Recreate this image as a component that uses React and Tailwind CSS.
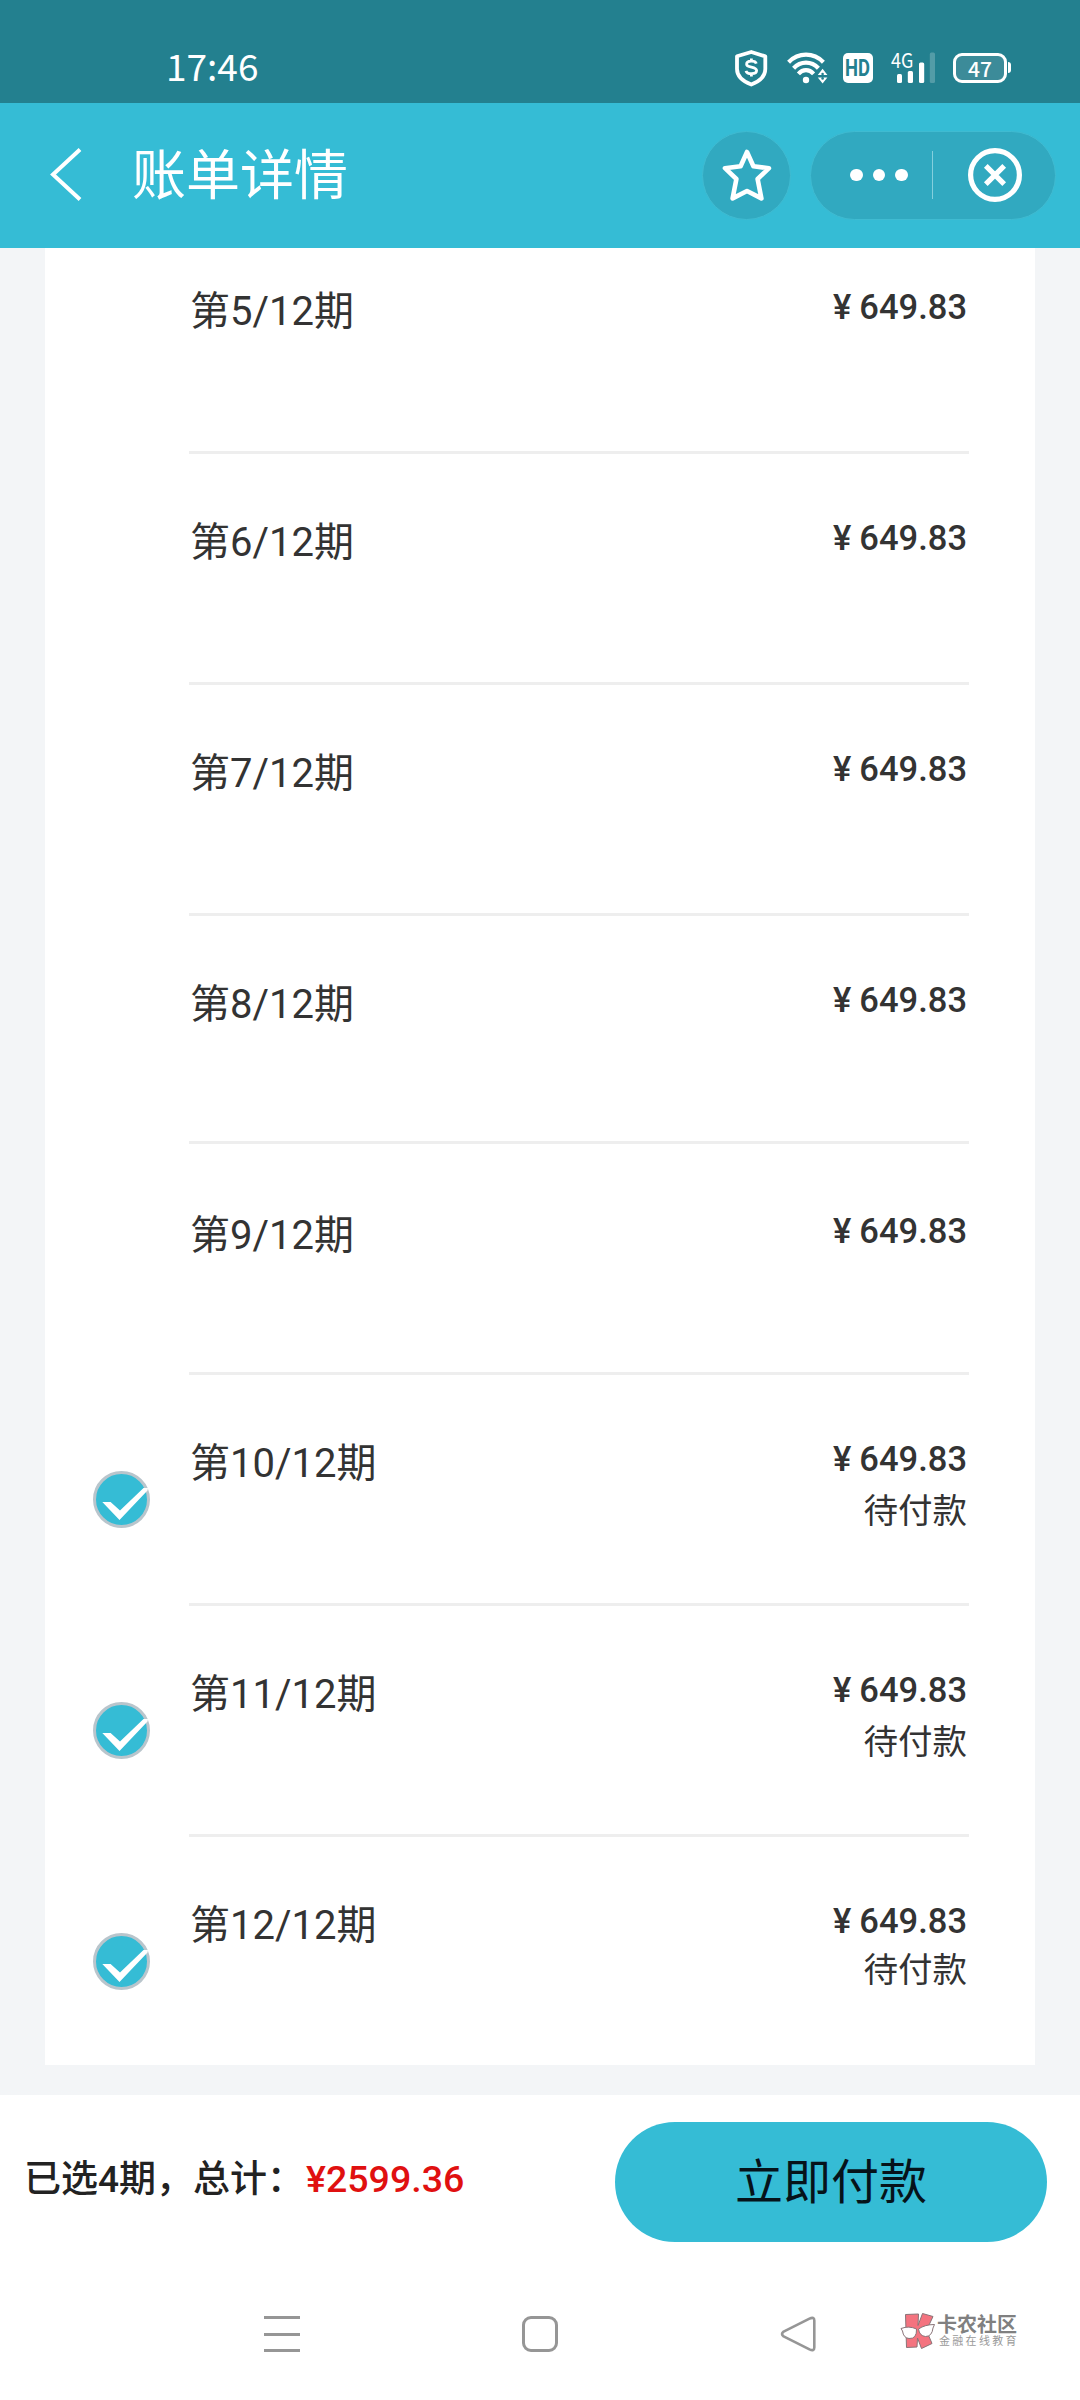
import React, { useState } from 'react';
import clsx from 'clsx';

// className holds the small per-row differences in height and padding
const initialPeriods = [
  { no: 5, amount: '649.83', className: 'h-[206px] pt-[37px]' },
  { no: 6, amount: '649.83', className: 'h-[231px] pt-[62px]' },
  { no: 7, amount: '649.83', className: 'h-[231px] pt-[62px]' },
  { no: 8, amount: '649.83', className: 'h-[228px] pt-[62px]' },
  { no: 9, amount: '649.83', className: 'h-[231px] pt-[65px]' },
  { no: 10, amount: '649.83', status: '待付款', checked: true, className: 'h-[231px] pt-[62px]', statusClass: 'mt-[11px]' },
  { no: 11, amount: '649.83', status: '待付款', checked: true, className: 'h-[231px] pt-[62px]', statusClass: 'mt-[11px]' },
  { no: 12, amount: '649.83', status: '待付款', checked: true, className: 'h-[228px] pt-[62px]', statusClass: 'mt-[8px]' },
];

const StatusBar = () => (
  <div className="flex h-[103px] items-start bg-[#23808f] text-white">
    <span className="ml-[166px] mt-[40px] w-[569px] font-['Noto_Sans_CJK_SC',sans-serif] text-[37px] leading-[50px]">
      17:46
    </span>
    <svg className="mt-[49px] h-[38px] w-[33px]" viewBox="0 0 33 38" fill="none" stroke="currentColor">
      <path d="M16.3 3 L30.3 7.3 V20 C30.3 28 24.5 32.4 16.3 35.6 C8 32.4 2 28 2 20 V7.3 Z" strokeWidth="3.8" strokeLinejoin="round" />
      <path d="M21.3 14.6 C20.3 11.2 11.6 11.2 11.6 15.2 C11.6 19.2 21.6 17.2 21.6 21.6 C21.6 25.8 12 25.6 11 21.8 M16.4 9.6 V12.6 M16.4 24.4 V27.4" strokeWidth="2.8" />
    </svg>
    <svg className="ml-[19px] mt-[51px] h-[34px] w-[42px]" viewBox="0 0 42 34" fill="none" stroke="currentColor" strokeWidth="4.2">
      <path d="M1.6 11.2 C11.5 1.2 26.5 1.2 36.4 11.2" />
      <path d="M6.6 17.2 C13.6 9.8 24.4 9.8 31.4 17.2" />
      <path d="M11.4 22.8 C15.8 18 22.2 18 26.6 22.8" />
      <circle cx="19" cy="29" r="3.2" fill="currentColor" stroke="none" />
      <path d="M30.8 24 L35.6 17.8 L40.4 24 M30.8 26.4 L35.6 32.6 L40.4 26.4" fill="currentColor" stroke="none" />
      <circle cx="35.6" cy="23" r="1.3" fill="#23808f" stroke="none" />
      <circle cx="35.6" cy="27.4" r="1.3" fill="#23808f" stroke="none" />
    </svg>
    <div className="ml-[14px] mt-[53px] flex h-[30px] w-[30px] items-center justify-center rounded-[5px] bg-white">
      <span className="scale-x-80 font-['Roboto',sans-serif] text-[23px] font-bold leading-none text-[#23808f]">HD</span>
    </div>
    <div className="relative ml-[24px] mt-[52px] h-[31px] w-[39px]">
      <span className="absolute -left-[6px] -top-[1px] origin-left scale-x-90 font-['Noto_Sans_CJK_SC',sans-serif] text-[20px] leading-[18px]">
        4G
      </span>
      <svg className="h-[31px] w-[39px]" viewBox="0 0 39 31" fill="currentColor">
        <rect x="0" y="22" width="5" height="9" rx="1.5" />
        <rect x="10.8" y="19" width="5.2" height="12" rx="1.5" />
        <rect x="22" y="10.6" width="5.2" height="20.4" rx="1.5" />
        <rect x="32.8" y="0.6" width="5.2" height="30.4" rx="1.5" opacity="0.22" />
      </svg>
    </div>
    <div className="ml-[17px] mt-[53px] flex h-[30px] w-[54px] items-center justify-center rounded-[9px] border-[3px] border-white bg-[#3c8b99]">
      <span className="font-['Noto_Sans_CJK_SC',sans-serif] text-[21px] font-medium leading-none">47</span>
    </div>
    <div className="ml-[1px] mt-[62px] h-[11px] w-[3px] rounded-r-full bg-white" />
  </div>
);

const Header = () => (
  <div className="flex h-[145px] items-center bg-[#35bcd5] pb-[1px] text-white">
    <button className="ml-[49px]">
      <svg className="h-[54px] w-[34px]" viewBox="0 0 34 54" fill="none" stroke="currentColor" strokeWidth="4">
        <path d="M31 1.5 L4 26.5 L31 51.5" />
      </svg>
    </button>
    <h1 className="ml-[49px] w-[570px] pt-[3px] text-[54px] leading-[60px]">账单详情</h1>
    <button className="flex size-[89px] items-center justify-center rounded-full border border-[#40bbd1] bg-[#31a9c0]">
      <svg className="h-[54px] w-[52px]" viewBox="0 0 52 54" fill="none" stroke="currentColor" strokeWidth="4.6" strokeLinejoin="round">
        <path d="M26 4 L32.4 18.2 L48 20.2 L36.6 31 L40.4 50.4 L26 43 L11.6 50.4 L15.4 31 L4 20.2 L19.6 18.2 Z" />
      </svg>
    </button>
    <div className="ml-[19px] flex h-[89px] w-[246px] items-center rounded-full border border-[#40bbd1] bg-[#31a9c0]">
      <button className="ml-[39px] flex gap-[10px]">
        <span className="size-[12.5px] rounded-full bg-white" />
        <span className="size-[12.5px] rounded-full bg-white" />
        <span className="size-[12.5px] rounded-full bg-white" />
      </button>
      <div className="ml-[24px] h-[48px] w-px bg-[#84cfdd]" />
      <button className="ml-[35px]">
        <svg className="size-[54px]" viewBox="0 0 54 54" fill="none" stroke="currentColor" strokeWidth="5.2">
          <circle cx="27" cy="27" r="24.4" />
          <path d="M17.8 17.8 L36.2 36.2 M36.2 17.8 L17.8 36.2" />
        </svg>
      </button>
    </div>
  </div>
);

const CheckMark = ({ onClick }) => (
  <button onClick={onClick}>
    <svg className="size-[57px]" viewBox="0 0 57 57">
      <circle cx="28.5" cy="28.5" r="27" fill="#35bcd5" stroke="#b9c5cc" strokeWidth="3" />
      <path d="M9.3 31 H17.6 L27 39.6 L50.5 17 H55 L54.5 19.5 L26.5 49 Z" fill="#fff" />
    </svg>
  </button>
);

const PeriodRow = ({ period, last, onToggle }) => (
  <div className="flex">
    <div className="flex w-[144px] shrink-0 items-start pl-[48px] pt-[96px]">
      {period.checked && <CheckMark onClick={() => onToggle(period.no)} />}
    </div>
    <div
      className={clsx(
        'flex w-[780px] justify-between pl-[1px] pr-[2px]',
        period.className,
        !last && 'border-b-[3px] border-[#eeeeee]'
      )}
    >
      <span className="text-[40px] leading-[54px]">第{period.no}/12期</span>
      <div className="flex flex-col items-end">
        <span className="text-[34.5px] font-medium leading-[44px]">¥<span className="ml-[8px]">{period.amount}</span></span>
        {period.status && (
          <span className={clsx('text-[34.5px] leading-[38px]', period.statusClass)}>{period.status}</span>
        )}
      </div>
    </div>
  </div>
);

const PayBar = () => (
  <div className="flex h-[174px] items-start bg-white">
    <p className="ml-[24px] mt-[57px] w-[591px] text-[37px] font-medium leading-[54px] text-[#222222]">
      已选4期，总计：<span className="ml-[2px] text-[37.5px] text-[#e01010]">¥2599.36</span>
    </p>
    <button className="mt-[27px] h-[120px] w-[432px] rounded-full bg-[#35bcd5] pt-[2px] text-[48px] text-[#06131a]">
      立即付款
    </button>
  </div>
);

const Logo = () => (
  <div className="flex">
    <svg className="h-[38px] w-[36px]" viewBox="0 0 36 38" stroke="#8a7478" strokeWidth="1">
      <path d="M5.5 2.5 L18.5 2 L18 13.5 L22.5 1.5 L33 4.5 L26.5 18.5 L32 31.5 L21.5 36.5 L17.5 26 L17 35 L6.5 35.5 Z" fill="#f4737f" />
      <path d="M1 16.5 Q9 13.5 16.5 17 Q17 27 9 26.5 Q3.5 26 2.5 19 Z" fill="#fff" />
      <path d="M18.5 17 Q25 12.5 34.5 12.5 L33 16 Q32 24.5 25.5 24.5 Q19.5 24 18.5 17 Z" fill="#fff" />
    </svg>
    <div className="ml-[1px] pt-[2px]">
      <p className="text-[20px] font-bold leading-[22px] text-[#808080]">卡农社区</p>
      <p className="ml-[2px] text-[11px] leading-[12px] tracking-[2.3px] text-[#9a9a9a]">金融在线教育</p>
    </div>
  </div>
);

const NavBar = () => (
  <div className="flex h-[131px] items-start bg-white text-[#969696]">
    <button className="ml-[264px] mt-[47px] flex h-[36px] w-[36px] flex-col justify-between">
      <span className="h-[3px] w-full bg-[#969696]" />
      <span className="h-[3px] w-full bg-[#969696]" />
      <span className="h-[3px] w-full bg-[#969696]" />
    </button>
    <button className="ml-[222px] mt-[47px] size-[36px] rounded-[9px] border-[3px] border-[#969696]" />
    <button className="ml-[222px] mt-[47px]">
      <svg className="size-[36px]" viewBox="0 0 36 36" fill="none" stroke="currentColor" strokeWidth="2.6" strokeLinejoin="round">
        <path d="M29.5 2.6 Q34.3 0.4 34.3 4.6 V31.4 Q34.3 35.6 29.5 33.4 L3.6 20.4 Q0.4 18 3.6 15.6 Z" />
      </svg>
    </button>
    <div className="ml-[84px] mt-[43px]">
      <Logo />
    </div>
  </div>
);

export default function App() {
  const [periods, setPeriods] = useState(initialPeriods);

  const togglePeriod = (no) => {
    setPeriods((prev) => prev.map((p) => (p.no === no ? { ...p, checked: !p.checked } : p)));
  };

  return (
    <div className="flex h-[2400px] w-[1080px] flex-col overflow-hidden bg-white font-['Roboto','Noto_Sans_CJK_SC',sans-serif]">
      <StatusBar />
      <Header />
      <div className="h-[1847px] bg-[#f3f5f7] px-[45px]">
        <div className="h-[1817px] bg-white text-[#333333]">
          {periods.map((period, index) => (
            <PeriodRow
              key={period.no}
              period={period}
              last={index === periods.length - 1}
              onToggle={togglePeriod}
            />
          ))}
        </div>
      </div>
      <PayBar />
      <NavBar />
    </div>
  );
}
